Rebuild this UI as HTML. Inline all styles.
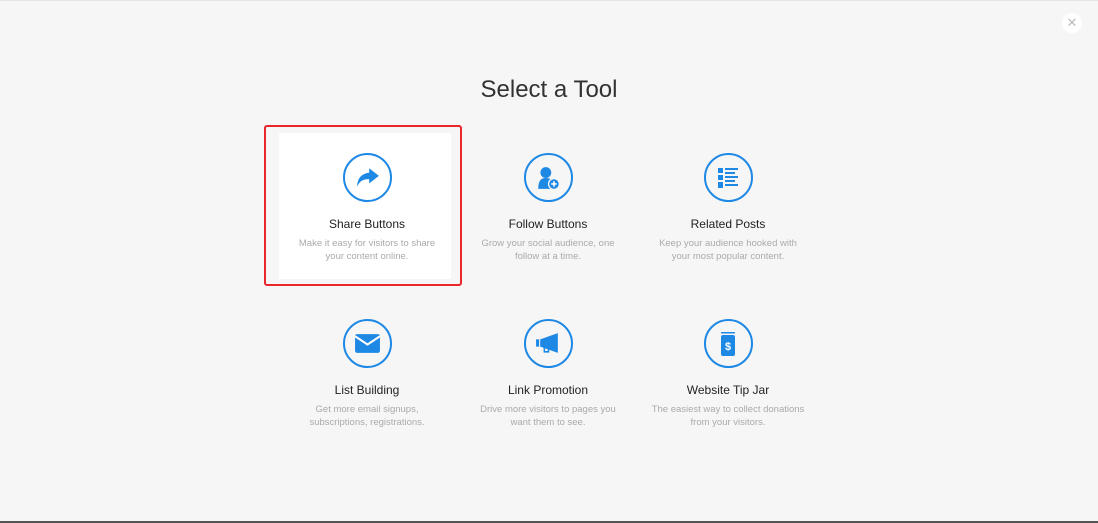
<!DOCTYPE html>
<html><head><style>
body{margin:0;width:1098px;height:523px;background:#f6f6f6;font-family:"Liberation Sans",sans-serif;position:relative;overflow:hidden;border-top:1px solid #e4e4e4;box-sizing:border-box}
h1{position:absolute;top:75px;left:0;width:100%;text-align:center;margin:0;font-weight:normal;font-size:24px;color:#333}
.t{position:absolute;width:180px;text-align:center}
.c{width:45px;height:45px;border:2px solid #1e88e5;border-radius:50%;margin:0 auto;display:flex;align-items:center;justify-content:center;background:transparent}
.n{font-size:12px;color:#222;margin-top:15px}
.d{font-size:9.5px;color:#aaa;line-height:13px;margin-top:6px}
.card{position:absolute;left:279px;top:132px;width:172px;height:146px;background:#fff}
.red{position:absolute;left:264px;top:124px;width:194px;height:157px;border:2px solid #e8262b;border-radius:3px}
.x{position:absolute;left:1062px;top:12px;width:20px;height:20px;border-radius:50%;background:#fff;color:#bbb;font-size:13px;text-align:center;line-height:20px}
</style></head><body>
<div class="x">✕</div>
<h1>Select a Tool</h1>
<div class="card"></div><div class="red"></div>
<div class="t" style="left:277px;top:152px"><div class="c"><svg width="26" height="24" viewBox="0 0 24 22"><path d="M14 2 L23 9 L14 16 V12 C8 12 5 14 3 19 C3 11 7 7 14 6 Z" fill="#1e88e5"/></svg></div><div class="n">Share Buttons</div><div class="d">Make it easy for visitors to share<br>your content online.</div></div>
<div class="t" style="left:458px;top:152px"><div class="c"><svg width="26" height="26" viewBox="0 0 24 24"><circle cx="10" cy="7" r="5" fill="#1e88e5"/><path d="M3 22 C3 15 5 12 10 12 C14 12 16 14 16 14 L16 22 Z" fill="#1e88e5"/><circle cx="17.5" cy="17.5" r="5" fill="#1e88e5" stroke="#f6f6f6" stroke-width="1.2"/><path d="M17.5 15V20M15 17.5H20" stroke="#fff" stroke-width="1.5"/></svg></div><div class="n">Follow Buttons</div><div class="d">Grow your social audience, one<br>follow at a time.</div></div>
<div class="t" style="left:638px;top:152px"><div class="c"><svg width="22" height="22" viewBox="0 0 22 22" fill="#1e88e5"><rect x="1" y="1" width="5" height="5"/><rect x="1" y="8" width="5" height="5"/><rect x="1" y="15" width="5" height="6"/><rect x="8" y="1" width="13" height="2"/><rect x="8" y="5" width="10" height="2"/><rect x="8" y="9" width="13" height="2"/><rect x="8" y="13" width="10" height="2"/><rect x="8" y="17" width="13" height="2"/></svg></div><div class="n">Related Posts</div><div class="d">Keep your audience hooked with<br>your most popular content.</div></div>
<div class="t" style="left:277px;top:318px"><div class="c"><svg width="27" height="21" viewBox="0 0 26 20"><rect x="1" y="1" width="24" height="18" rx="2" fill="#1e88e5"/><path d="M1 3 L13 11 L25 3" stroke="#fff" stroke-width="2" fill="none"/></svg></div><div class="n">List Building</div><div class="d">Get more email signups,<br>subscriptions, registrations.</div></div>
<div class="t" style="left:458px;top:318px"><div class="c"><svg width="27" height="23" viewBox="0 0 26 22" fill="#1e88e5"><rect x="1" y="7" width="3" height="7"/><path d="M5 7 L22 1 V20 L5 14 Z"/><path d="M9 15 V19 H13 V16" stroke="#1e88e5" stroke-width="1.5" fill="none"/></svg></div><div class="n">Link Promotion</div><div class="d">Drive more visitors to pages you<br>want them to see.</div></div>
<div class="t" style="left:638px;top:318px"><div class="c"><svg width="18" height="26" viewBox="0 0 18 26"><rect x="2" y="1" width="14" height="1.5" fill="#1e88e5"/><rect x="2" y="4" width="14" height="21" rx="2" fill="#1e88e5"/><text x="9" y="19" font-size="11" font-weight="bold" fill="#fff" text-anchor="middle" font-family="Liberation Sans">$</text></svg></div><div class="n">Website Tip Jar</div><div class="d">The easiest way to collect donations<br>from your visitors.</div></div>
<div style="position:absolute;left:0;bottom:0;width:100%;height:2px;background:#555"></div>
</body></html>
